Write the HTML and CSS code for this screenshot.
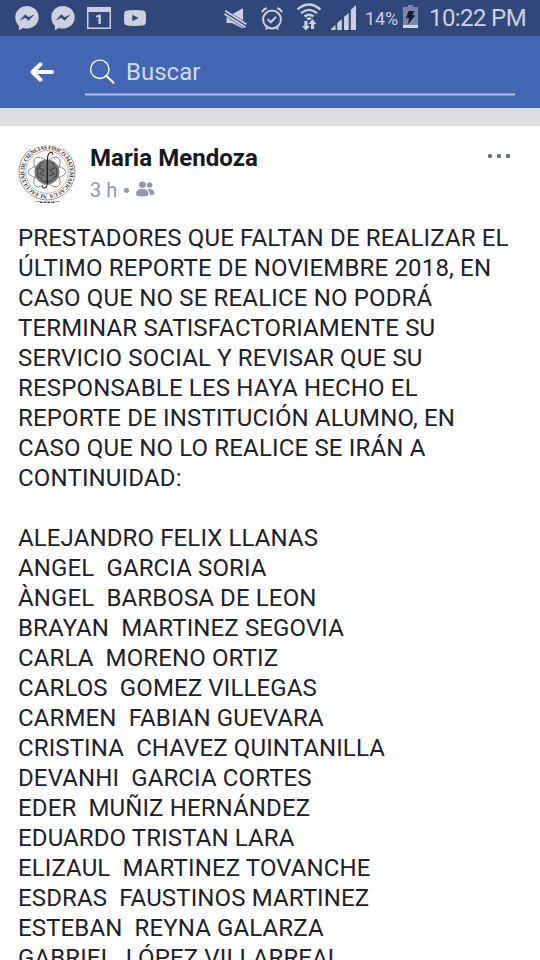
FILE: index.html
```html
<!DOCTYPE html>
<html lang="es">
<head>
<meta charset="utf-8">
<title>Maria Mendoza</title>
<link rel="stylesheet" href="styles.css">
</head>
<body>
<div class="screen">
  <header class="status">
    <div class="notifications">
      <svg width="24" height="25" viewBox="0 0 24 25"><path fill="currentColor" d="M12 0C5.300 0 .3 4.900 .3 11.300c0 3.400 1.300 6.300 3.600 8.400V24.300l4.200-2.400c1.200.4 2.500.6 3.900.6 6.700 0 11.700-4.900 11.700-11.200S18.700 0 12 0z"/><path class="cutout" d="M4.500 14.800 10.200 8.300l3.500 3 6-3.100-6.200 6.500-3.200-3z"/></svg>
      <svg width="24" height="25" viewBox="0 0 24 25"><path fill="currentColor" d="M12 0C5.300 0 .3 4.900 .3 11.300c0 3.400 1.300 6.300 3.600 8.400V24.300l4.200-2.400c1.200.4 2.500.6 3.900.6 6.700 0 11.700-4.900 11.700-11.200S18.700 0 12 0z"/><path class="cutout" d="M4.500 14.800 10.200 8.300l3.500 3 6-3.100-6.200 6.500-3.200-3z"/></svg>
      <svg width="24" height="22" viewBox="0 0 24 22"><path fill="currentColor" fill-rule="evenodd" d="M0 0h24v22H0zM1.500 5v15.500h21V5z"/><path fill="currentColor" d="M9 8.700 12 7.500h1.800v9.500h-2.300v-7L9 10.500z"/></svg>
      <svg class="video" width="22" height="16" viewBox="0 0 22 16"><path fill="currentColor" fill-rule="evenodd" d="M3 .5Q11-.4 19 .5q2.600.2 2.800 2.700.4 4.800 0 9.600-.2 2.500-2.800 2.700-8 .9-16 0Q.4 15.300.2 12.800q-.4-4.800 0-9.600Q.4.700 3 .5zM8.300 4.700v6.600l6.400-3.300z"/></svg>
    </div>
    <div class="system">
      <svg width="24" height="22" viewBox="0 0 24 22"><path fill="currentColor" d="M2.500 6.500h5L19 .2v20.300L8 15H2.500z"/><path class="cutline" d="M1 4.700 22 17.900"/><path fill="none" stroke="currentColor" stroke-width="1.900" d="m1.200 2.700 21.300 13.600M.5 6l21 13.400"/></svg>
      <svg class="alarm" width="22" height="24" viewBox="0 0 22 24"><g fill="none" stroke="currentColor" stroke-width="2"><circle cx="11" cy="12.500" r="8.900"/><path d="m6.500 12.200 3.300 3.100 5.300-5.600M1 5.200Q2.400 2.200 5.700 1M21 5.200Q19.600 2.200 16.300 1M5.500 20.300v2.500M16.500 20.300v2.500"/></g></svg>
      <svg class="wifi" width="26" height="28" viewBox="0 0 26 28"><g fill="none" stroke="currentColor" stroke-width="2.300"><path d="M1.500 6.500Q12.500-3.500 24.500 6.500M5 10.100q8-6.500 16 0M8.500 13.500q4.500-3.600 9 0M11 16.300q2-1.500 4 0"/></g><path fill="currentColor" d="M8.300 18h3.200v5H14l-4.100 4.500L5.800 23h2.500zM15 26v-5h-2.500l4-5 4.100 5h-2.500v5z"/></svg>
      <svg class="signal" width="25" height="25" viewBox="0 0 25 25"><path fill="currentColor" d="M0 25v-1l4.500-4V25zM6.300 25v-7l4.500-4v11zM13 25V12l4.700-4v17zM19.800 25V5L25 0v25z"/></svg>
      <span class="percent">14%</span>
      <svg class="battery" width="15" height="23" viewBox="0 0 15 23"><path fill="#7787ad" d="M5 0h5v2h5v21H0V2h5z"/><path fill="#d1d6e3" d="M0 20h15v3H0z"/><path fill="#171c26" d="M5.500 6h6l-2.200 4.200h3L4.500 20l1.700-6.700H3z"/></svg>
      <span class="clock">10:22 PM</span>
    </div>
  </header>
  <nav class="toolbar">
    <svg class="back" width="24" height="20" viewBox="0 0 24 20"><path d="M22 10H3M10.500 2.300 2.500 10l8 7.700"/></svg>
    <div class="search">
      <svg width="26" height="26" viewBox="0 0 26 26"><g fill="none" stroke="#fff" stroke-linecap="round"><circle cx="10.800" cy="10.300" r="9.200" stroke-width="1.400"/><path stroke-width="2" d="m17.500 17 7 6.800"/></g></svg>
      <span>Buscar</span>
    </div>
  </nav>
  <main class="post">
    <div class="post-header">
      <svg class="avatar" width="60" height="60" viewBox="0 0 60 60">
        <defs><path id="ring" d="M29 49.700A22.700 22.700 0 1 1 29.100 49.700"/></defs>
        <g fill="none" stroke="#999" stroke-width=".7"><circle cx="29" cy="27" r="21.300"/><path d="M13 4A28 28 0 1 0 45 4" stroke="#666"/></g>
        <g fill="none" stroke="#777" stroke-width=".8"><ellipse cx="29" cy="27" rx="19" ry="7"/><ellipse cx="29" cy="27" rx="18" ry="8" transform="rotate(50 29 27)"/><ellipse cx="29" cy="27" rx="18" ry="8" transform="rotate(-50 29 27)"/></g>
        <circle cx="29" cy="27" r="12.500" fill="#777"/>
        <path fill="none" stroke="#444" stroke-width="1.100" d="M29 15v24M26 17q-5 1-4 5-5 2-2 6-2 4 3 5 1 5 6 3M32 17q5 1 4 5 5 2 2 6 2 4-3 5-1 5-6 3M21 23l5 2-4 4 5 2M37 23l-5 2 4 4-5 2"/>
        <path fill="none" stroke="#222" stroke-width="1.100" d="M34.500 9.500q.2-2.700-2.200-2-2.800 1-2.800 7v22q0 6-3 6.500-2 .2-2-1.800"/>
        <text class="seal"><textPath href="#ring" textLength="140">NL FACULTAD DE CIENCIAS FISICO MATEMATICAS UA</textPath></text>
        <path fill="none" stroke="#444" stroke-width="1.400" stroke-dasharray="2 .6 1 .5" d="M22 57.200h15"/>
        <path fill="none" stroke="#777" stroke-width=".7" d="M17 56.500h5M37 56.500h5"/>
      </svg>
      <div class="author">
        <div class="name">Maria Mendoza</div>
        <div class="meta"><span>3 h</span><i></i><svg width="19" height="16" viewBox="0 0 19 16"><g fill="currentColor"><circle cx="6.400" cy="3.700" r="3.300"/><path d="M0 13q0-5 6.200-5t6.200 5q0 2.500-6.200 2.500T0 13z"/><circle cx="13.700" cy="4" r="2.700"/><path d="M13 8q5.500 0 5.500 4.500 0 1.500-4.600 1.500.2-3.800-2.400-5.800Z"/></g></svg></div>
      </div>
      <div class="more"><i></i><i></i><i></i></div>
    </div>
    <div class="body intro">PRESTADORES QUE FALTAN DE REALIZAR EL
ÚLTIMO REPORTE DE NOVIEMBRE 2018, EN
CASO QUE NO SE REALICE NO PODRÁ
TERMINAR SATISFACTORIAMENTE SU
SERVICIO SOCIAL Y REVISAR QUE SU
RESPONSABLE LES HAYA HECHO EL
REPORTE DE INSTITUCIÓN ALUMNO, EN
CASO QUE NO LO REALICE SE IRÁN A
CONTINUIDAD:</div>
    <div class="body names">ALEJANDRO FELIX LLANAS
ANGEL  GARCIA SORIA
ÀNGEL  BARBOSA DE LEON
BRAYAN  MARTINEZ SEGOVIA
CARLA  MORENO ORTIZ
CARLOS  GOMEZ VILLEGAS
CARMEN  FABIAN GUEVARA
CRISTINA  CHAVEZ QUINTANILLA
DEVANHI  GARCIA CORTES
EDER  MUÑIZ HERNÁNDEZ
EDUARDO TRISTAN LARA
ELIZAUL  MARTINEZ TOVANCHE
ESDRAS  FAUSTINOS MARTINEZ
ESTEBAN  REYNA GALARZA
GABRIEL  LÓPEZ VILLARREAL</div>
  </main>
</div>
</body>
</html>
```
FILE: styles.css
```css
* { box-sizing: border-box; }
body { margin: 0; font-family: Roboto, sans-serif; background: #fff; }
svg { display: block; flex: none; }
.screen { height: 960px; overflow: hidden; }
.status { height: 36px; display: flex; justify-content: space-between; background: #30477a; color: #cbd1e0; padding: 0 13px 0 15px; }
.notifications { display: flex; gap: 12px; padding-top: 6px; }
.notifications .video { margin-top: 4px; margin-left: 1px; }
.notifications svg:nth-child(3) { margin-top: 1px; }
.cutout { fill: #30477a; }
.cutline { stroke: #30477a; stroke-width: 6; }
.system { display: flex; align-items: flex-start; }
.system > svg:first-child { margin-top: 8px; }
.system .alarm { margin: 7px 0 0 13px; }
.system .wifi { margin: 3px 0 0 13px; }
.system .signal { margin: 5px 0 0 9px; }
.percent { font-size: 18px; letter-spacing: -.1px; line-height: 38px; margin-left: 9px; white-space: nowrap; }
.battery { margin: 5px 0 0 5px; }
.clock { width: 98px; font-size: 24px; letter-spacing: -.6px; line-height: 37px; margin-left: 11px; white-space: nowrap; }
.toolbar { height: 72px; display: flex; background: #4267b2; padding-left: 30px; }
.back { margin-top: 26px; fill: none; stroke: #fff; stroke-width: 4; stroke-linecap: round; stroke-linejoin: round; }
.search { width: 430px; height: 60px; margin-left: 31px; display: flex; padding: 23px 0 0 4px; gap: 11px; background: linear-gradient(#7b94c9 0 1px, #b5c3df 1px 2px, #7b94c9 2px) bottom / 100% 3px no-repeat; color: #d1dbee; }
.search span { font-size: 24px; line-height: 28px; margin-top: -1px; }
.post { border-top: 18px solid #dddfe4; padding: 18px 18px 0; }
.post-header { height: 79px; display: flex; }
.avatar { margin-top: 1px; }
.author { margin-left: 12px; flex: 1; }
.name { font-size: 24px; line-height: 28px; font-weight: 700; letter-spacing: .06px; color: #141823; white-space: nowrap; }
.meta { display: flex; align-items: center; color: #9197a3; font-size: 20px; line-height: 24px; margin-top: 6px; }
.meta i { width: 5px; height: 5px; border-radius: 50%; background: currentColor; margin: 0 7px; }
.meta svg { margin-top: -3px; }
.more { display: flex; gap: 5px; padding: 10px 12px 0 0; }
.more i { width: 4px; height: 4px; border-radius: 1.500px; background: #646b78; }
.body { font-size: 24px; line-height: 30px; color: #1d2129; white-space: pre; }
.intro { letter-spacing: .165px; }
.names { letter-spacing: .12px; margin-top: 30px; }
.seal { font: bold 5.800px "Liberation Serif", serif; fill: #333; }
```
